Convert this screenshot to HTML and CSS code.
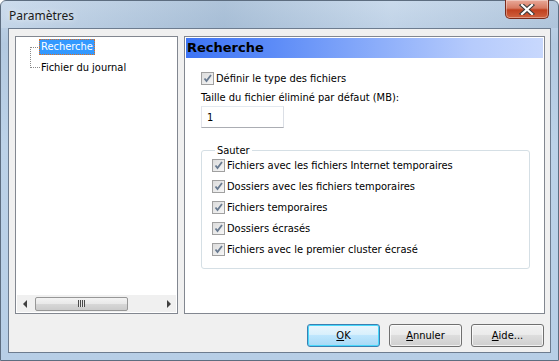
FILE: index.html
```html
<!DOCTYPE html>
<html lang="fr">
<head>
    <meta charset="UTF-8">
    <title>Paramètres</title>
    <link rel="stylesheet" href="styles.css">
</head>
<body>
    <div class="window">
        <!-- barre de titre -->
        <div class="titlebar">
            <span class="title">Paramètres</span>
            <button class="close-btn" aria-label="Fermer">
                <svg width="16" height="11" viewBox="0 0 16 11">
                    <path d="M3 1 L13 10 M13 1 L3 10" stroke="#3a3a3a" stroke-width="4.2" stroke-linecap="square"/>
                    <path d="M3 1 L13 10 M13 1 L3 10" stroke="#ffffff" stroke-width="2.2" stroke-linecap="square"/>
                </svg>
            </button>
        </div>

        <div class="client">
            <div class="panels">
                <!-- arbre de gauche -->
                <div class="tree">
                    <div class="tree-items">
                        <div class="tree-lines"></div>
                        <div class="tree-item selected">Recherche</div>
                        <div class="tree-item">Fichier du journal</div>
                    </div>
                    <div class="hscroll">
                        <span class="arrow left"></span>
                        <div class="track">
                            <div class="thumb"><span class="grip"></span></div>
                        </div>
                        <span class="arrow right"></span>
                    </div>
                </div>

                <!-- page de droite -->
                <div class="page">
                    <div class="page-header">Recherche</div>
                    <div class="page-body">
                        <label class="check"><span class="box"></span>Définir le type des fichiers</label>
                        <div class="field-label">Taille du fichier éliminé par défaut (MB):</div>
                        <div class="textbox">1</div>

                        <fieldset class="group">
                            <legend>Sauter</legend>
                            <label class="check"><span class="box"></span>Fichiers avec les fichiers Internet temporaires</label>
                            <label class="check"><span class="box"></span>Dossiers avec les fichiers temporaires</label>
                            <label class="check"><span class="box"></span>Fichiers temporaires</label>
                            <label class="check"><span class="box"></span>Dossiers écrasés</label>
                            <label class="check"><span class="box"></span>Fichiers avec le premier cluster écrasé</label>
                        </fieldset>
                    </div>
                </div>
            </div>

            <div class="buttons">
                <button class="btn default"><u>O</u>K</button>
                <button class="btn"><u>A</u>nnuler</button>
                <button class="btn"><u>A</u>ide...</button>
            </div>
        </div>
    </div>
</body>
</html>
```

FILE: styles.css
```css
html, body {
    margin: 0;
    padding: 0;
}

body {
    width: 559px;
    height: 361px;
    overflow: hidden;
    font-family: Tahoma, "DejaVu Sans Condensed", "DejaVu Sans", sans-serif;
    font-size: 11px;
    color: #000;
}

.window {
    width: 559px;
    height: 361px;
    box-sizing: border-box;
    display: flex;
    flex-direction: column;
    border: 1px solid #5d6d80;
    border-radius: 6px 6px 0 0;
    background: linear-gradient(180deg, #c4d6ea 0%, #b3c9e0 12%, #bcd2e8 40%, #b7cee6 100%);
    padding: 0 7px 7px 7px;
}

/* barre de titre */
.titlebar {
    height: 28px;
    display: flex;
    align-items: flex-start;
    justify-content: space-between;
    background: linear-gradient(90deg, rgba(255,255,255,0.15), rgba(110,140,170,0.25) 40%, rgba(255,255,255,0.1) 70%, rgba(130,155,180,0.2));
    margin: 0 -7px;
    padding: 0 7px;
}

.title {
    font-family: "Noto Sans", "DejaVu Sans", sans-serif;
    font-size: 12px;
    margin-top: 6px;
    margin-left: 1px;
    color: #1b1b1b;
    text-shadow: 0 0 6px rgba(255,255,255,0.9);
}

.close-btn {
    width: 44px;
    height: 19px;
    margin-top: -1px;
    margin-right: 2px;
    border: 1px solid #7a2a1a;
    border-top: none;
    border-radius: 0 0 5px 5px;
    background: linear-gradient(180deg, #e9a999 0%, #d77a62 45%, #c0401f 55%, #d0623f 100%);
    box-shadow: inset 0 0 0 1px rgba(255,255,255,0.35);
    display: flex;
    align-items: center;
    justify-content: center;
    padding: 0;
}

.client {
    flex: 1;
    background: #f0f0f0;
    border: 1px solid #6d7c8f;
    padding: 7px 5px 5px 6px;
    display: flex;
    flex-direction: column;
}

.panels {
    display: flex;
    gap: 6px;
    height: 278px;
}

/* arbre */
.tree {
    width: 163px;
    box-sizing: border-box;
    background: #fff;
    border: 1px solid #828790;
    display: flex;
    flex-direction: column;
    padding: 1px;
}

.tree-items {
    flex: 1;
    position: relative;
    padding: 1px 0 0 22px;
}

.tree-lines {
    position: absolute;
    left: 13px;
    top: 9px;
    width: 9px;
    height: 19px;
    border-left: 1px dotted #8a8a8a;
    border-top: 1px dotted #8a8a8a;
    border-bottom: 1px dotted #8a8a8a;
}

.tree-item {
    display: inline-block;
    height: 14px;
    line-height: 14px;
    padding: 0 1px;
    margin-bottom: 5px;
    border: 1px solid transparent;
    white-space: nowrap;
}

.tree-item.selected {
    background: #3399ff;
    color: #fff;
    border: 1px dotted #e07020;
}

.hscroll {
    height: 17px;
    display: flex;
    align-items: center;
    background: #f0f0f0;
}

.arrow {
    width: 17px;
    height: 17px;
    position: relative;
}

.arrow.left::after,
.arrow.right::after {
    content: "";
    position: absolute;
    top: 5px;
    border-top: 4px solid transparent;
    border-bottom: 4px solid transparent;
}

.arrow.left::after {
    left: 6px;
    border-right: 4px solid #404040;
}

.arrow.right::after {
    left: 8px;
    border-left: 4px solid #404040;
}

.track {
    flex: 1;
    height: 17px;
    display: flex;
    align-items: center;
}

.thumb {
    width: 93px;
    height: 14px;
    margin-left: 1px;
    box-sizing: border-box;
    border: 1px solid #979797;
    border-radius: 2px;
    background: linear-gradient(180deg, #f3f3f3 0%, #e8e8e8 50%, #d7d7d7 51%, #cbcbcb 100%);
    display: flex;
    align-items: center;
    justify-content: center;
}

.grip {
    width: 7px;
    height: 7px;
    background: repeating-linear-gradient(90deg, #4b4b4b 0 1px, #e8e8e8 1px 2px);
}

/* page de droite */
.page {
    flex: 1;
    background: #fff;
    border: 1px solid #828790;
    padding: 1px;
}

.page-header {
    height: 20px;
    line-height: 20px;
    padding-left: 1px;
    font-family: Tahoma, "DejaVu Sans", sans-serif;
    font-weight: bold;
    font-size: 13px;
    background: linear-gradient(90deg, #3d74f5 0%, #5d8cf7 25%, #8eaffa 55%, #b6cbfc 80%, #c8d8fd 100%);
}

.page-body {
    padding: 14px 0 0 15px;
}

.check {
    display: flex;
    align-items: center;
    height: 13px;
    white-space: nowrap;
}

.box {
    width: 11px;
    height: 11px;
    border: 1px solid #a0a0a0;
    margin-right: 2px;
    background:
        url("data:image/svg+xml,%3Csvg xmlns='http://www.w3.org/2000/svg' width='11' height='11'%3E%3Cpath d='M2.5 5.5 L4.5 8 L9 2' fill='none' stroke='%23687a90' stroke-width='1.8'/%3E%3C/svg%3E") center no-repeat,
        linear-gradient(135deg, #dcdcdc, #f6f6f6);
    flex: none;
}

.field-label {
    margin-top: 6px;
    height: 13px;
    line-height: 13px;
}

.textbox {
    width: 83px;
    height: 22px;
    box-sizing: border-box;
    margin-top: 2px;
    border: 1px solid #abadb3;
    border-top-color: #e3e9ef;
    border-left-color: #e2e3ea;
    border-right-color: #dbdfe6;
    padding: 4px 0 0 5px;
    line-height: 13px;
}

.group {
    margin: 16px 13px 0 0;
    padding: 2px 0 12px 10px;
    border: 1px solid #d5dfe5;
    border-radius: 3px;
    display: flex;
    flex-direction: column;
    gap: 8px;
}

.group legend {
    padding: 0 2px;
    margin-left: 3px;
    line-height: 13px;
}

/* boutons */
.buttons {
    display: flex;
    justify-content: flex-end;
    gap: 9px;
    margin-top: 10px;
    padding-right: 1px;
}

.btn {
    width: 73px;
    height: 23px;
    font-family: Tahoma, "DejaVu Sans Condensed", "DejaVu Sans", sans-serif;
    font-size: 11px;
    color: #000;
    border: 1px solid #707070;
    border-radius: 3px;
    background: linear-gradient(180deg, #f2f2f2 0%, #ebebeb 45%, #dddddd 50%, #cfcfcf 100%);
    box-shadow: inset 0 0 0 1px rgba(255,255,255,0.7);
    padding: 0;
}

.btn.default {
    border-color: #3c7fb1;
    box-shadow: inset 0 0 0 1px #48d8fb;
    background: linear-gradient(180deg, #eaf6fd 0%, #d9f0fc 45%, #bee6fd 50%, #a7d9f5 100%);
}
```
